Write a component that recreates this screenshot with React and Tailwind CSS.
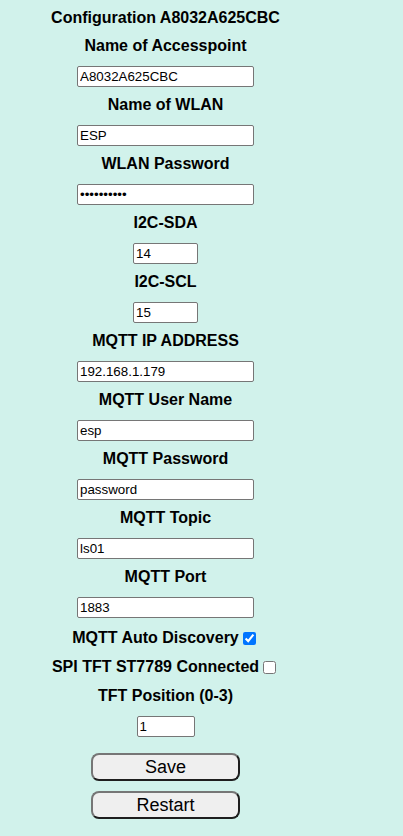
import React, { useState } from "react";

const fields = [
  { key: "ap", label: "Name of Accesspoint", value: "A8032A625CBC", size: "wide" },
  { key: "ssid", label: "Name of WLAN", value: "ESP", size: "wide" },
  { key: "pass", label: "WLAN Password", value: "1234567890", size: "wide", type: "password" },
  { key: "sda", label: "I2C-SDA", value: "14", size: "small" },
  { key: "scl", label: "I2C-SCL", value: "15", size: "small" },
  { key: "mqttIp", label: "MQTT IP ADDRESS", value: "192.168.1.179", size: "wide" },
  { key: "mqttUser", label: "MQTT User Name", value: "esp", size: "wide" },
  { key: "mqttPass", label: "MQTT Password", value: "password", size: "wide" },
  { key: "topic", label: "MQTT Topic", value: "ls01", size: "wide" },
  { key: "port", label: "MQTT Port", value: "1883", size: "wide" },
];

const inputBase =
  "h-[21px] border border-[#767676] rounded-[2px] bg-white px-[2px] text-[13.33px] text-black leading-none outline-none";

export default function App() {
  const [values, setValues] = useState(
    Object.fromEntries(fields.map((f) => [f.key, f.value]))
  );
  const [autoDiscovery, setAutoDiscovery] = useState(true);
  const [tft, setTft] = useState(false);
  const [tftPos, setTftPos] = useState("1");

  return (
    <div
      className="min-h-[836px] w-full bg-[#d1f2eb] text-black"
      style={{ fontFamily: '"Liberation Sans", Arial, sans-serif' }}
    >
      <div className="w-[331px] flex flex-col items-center pt-[9px] text-center">
        <div className="text-[16px] font-bold leading-[18px]">Configuration A8032A625CBC</div>

        <div className="flex flex-col items-center gap-[9px] mt-[10px]">
          {fields.map((f) => (
            <div key={f.key} className="flex flex-col items-center">
              <div className="text-[16px] font-bold leading-[18px] mb-[11px]">{f.label}</div>
              <input
                type={f.type || "text"}
                value={values[f.key]}
                onChange={(e) => setValues((v) => ({ ...v, [f.key]: e.target.value }))}
                className={`${inputBase} ${f.size === "small" ? "w-[65px]" : "w-[177px]"}`}
              />
            </div>
          ))}
        </div>

        <label className="flex items-center mt-[11px] text-[16px] font-bold leading-[18px]">
          MQTT Auto Discovery
          <input
            type="checkbox"
            checked={autoDiscovery}
            onChange={(e) => setAutoDiscovery(e.target.checked)}
            className="w-[13px] h-[13px] ml-[4px] mr-[3px]"
          />
        </label>

        <label className="flex items-center mt-[11px] text-[16px] font-bold leading-[18px]">
          SPI TFT ST7789 Connected
          <input
            type="checkbox"
            checked={tft}
            onChange={(e) => setTft(e.target.checked)}
            className="w-[13px] h-[13px] ml-[4px] mr-[3px]"
          />
        </label>

        <div className="mt-[11px] text-[16px] font-bold leading-[18px] mb-[11px]">TFT Position (0-3)</div>
        <input
          type="text"
          value={tftPos}
          onChange={(e) => setTftPos(e.target.value)}
          className={`${inputBase} w-[58px] h-[20px]`}
        />

        <button className="mt-[16px] w-[149px] h-[28px] rounded-[8px] border-2 border-t-[#767676] border-l-[#767676] border-b-[#1e1e1e] border-r-[#1e1e1e] bg-[#efefef] text-[18px] leading-none">
          Save
        </button>
        <button className="mt-[10px] w-[149px] h-[28px] rounded-[8px] border-2 border-t-[#767676] border-l-[#767676] border-b-[#1e1e1e] border-r-[#1e1e1e] bg-[#efefef] text-[18px] leading-none">
          Restart
        </button>
      </div>
    </div>
  );
}
